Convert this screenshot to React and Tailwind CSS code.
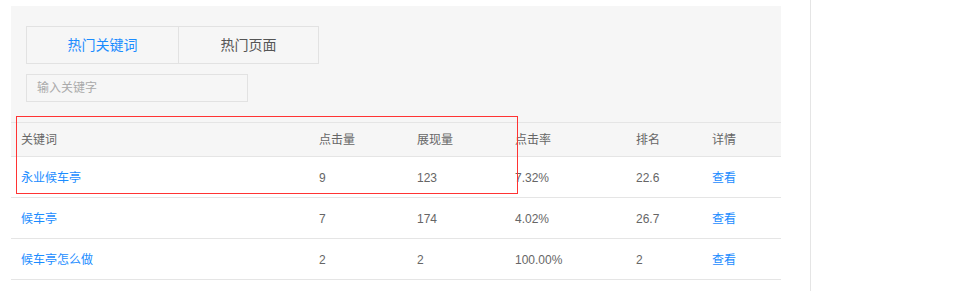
import React from 'react';

const rows = [
  { kw: '永业候车亭', clicks: '9', views: '123', ctr: '7.32%', rank: '22.6' },
  { kw: '候车亭', clicks: '7', views: '174', ctr: '4.02%', rank: '26.7' },
  { kw: '候车亭怎么做', clicks: '2', views: '2', ctr: '100.00%', rank: '2' },
];

const cols = 'grid grid-cols-[298px_98px_98px_121px_76px_79px] items-center [&>div]:pl-[10px]';

export default function App() {
  return (
    <div
      className="flex h-[291px] w-[955px] overflow-hidden bg-white text-[12px] text-[#666]"
      style={{ fontFamily: '"Liberation Sans", "Noto Sans CJK SC", sans-serif' }}
    >
      <div className="relative ml-[11px] mt-[6px] w-[770px]">
        <div className="bg-[#f6f6f6] px-[15px] pt-[20px] pb-[20px]">
          <div className="flex h-[38px] w-[293px] border border-[#e2e2e2]">
            <div className="flex w-[152px] items-center justify-center border-r border-[#e2e2e2] text-[14px] text-[#1a8cff]">热门关键词</div>
            <div className="flex flex-1 items-center justify-center text-[14px] text-[#555]">热门页面</div>
          </div>
          <div className="mt-[10px] flex h-[28px] w-[222px] items-center border border-[#e2e2e2] px-[10px] text-[12px] text-[#aaa]">
            输入关键字
          </div>
        </div>
        <div className={`${cols} h-[35px] border-y border-[#e5e5e5] bg-[#f6f6f6]`}>
          <div>关键词</div>
          <div>点击量</div>
          <div>展现量</div>
          <div>点击率</div>
          <div>排名</div>
          <div>详情</div>
        </div>
        {rows.map((r) => (
          <div key={r.kw} className={`${cols} h-[41px] border-b border-[#e5e5e5] pt-px`}>
            <div className="text-[#1a8cff]">{r.kw}</div>
            <div>{r.clicks}</div>
            <div>{r.views}</div>
            <div>{r.ctr}</div>
            <div>{r.rank}</div>
            <div className="text-[#1a8cff]">查看</div>
          </div>
        ))}
        <div className="pointer-events-none absolute left-[5px] top-[110px] h-[78px] w-[502px] border border-[#f33]" />
      </div>
      <div className="ml-[29px] w-px bg-[#e5e5e5]" />
    </div>
  );
}
